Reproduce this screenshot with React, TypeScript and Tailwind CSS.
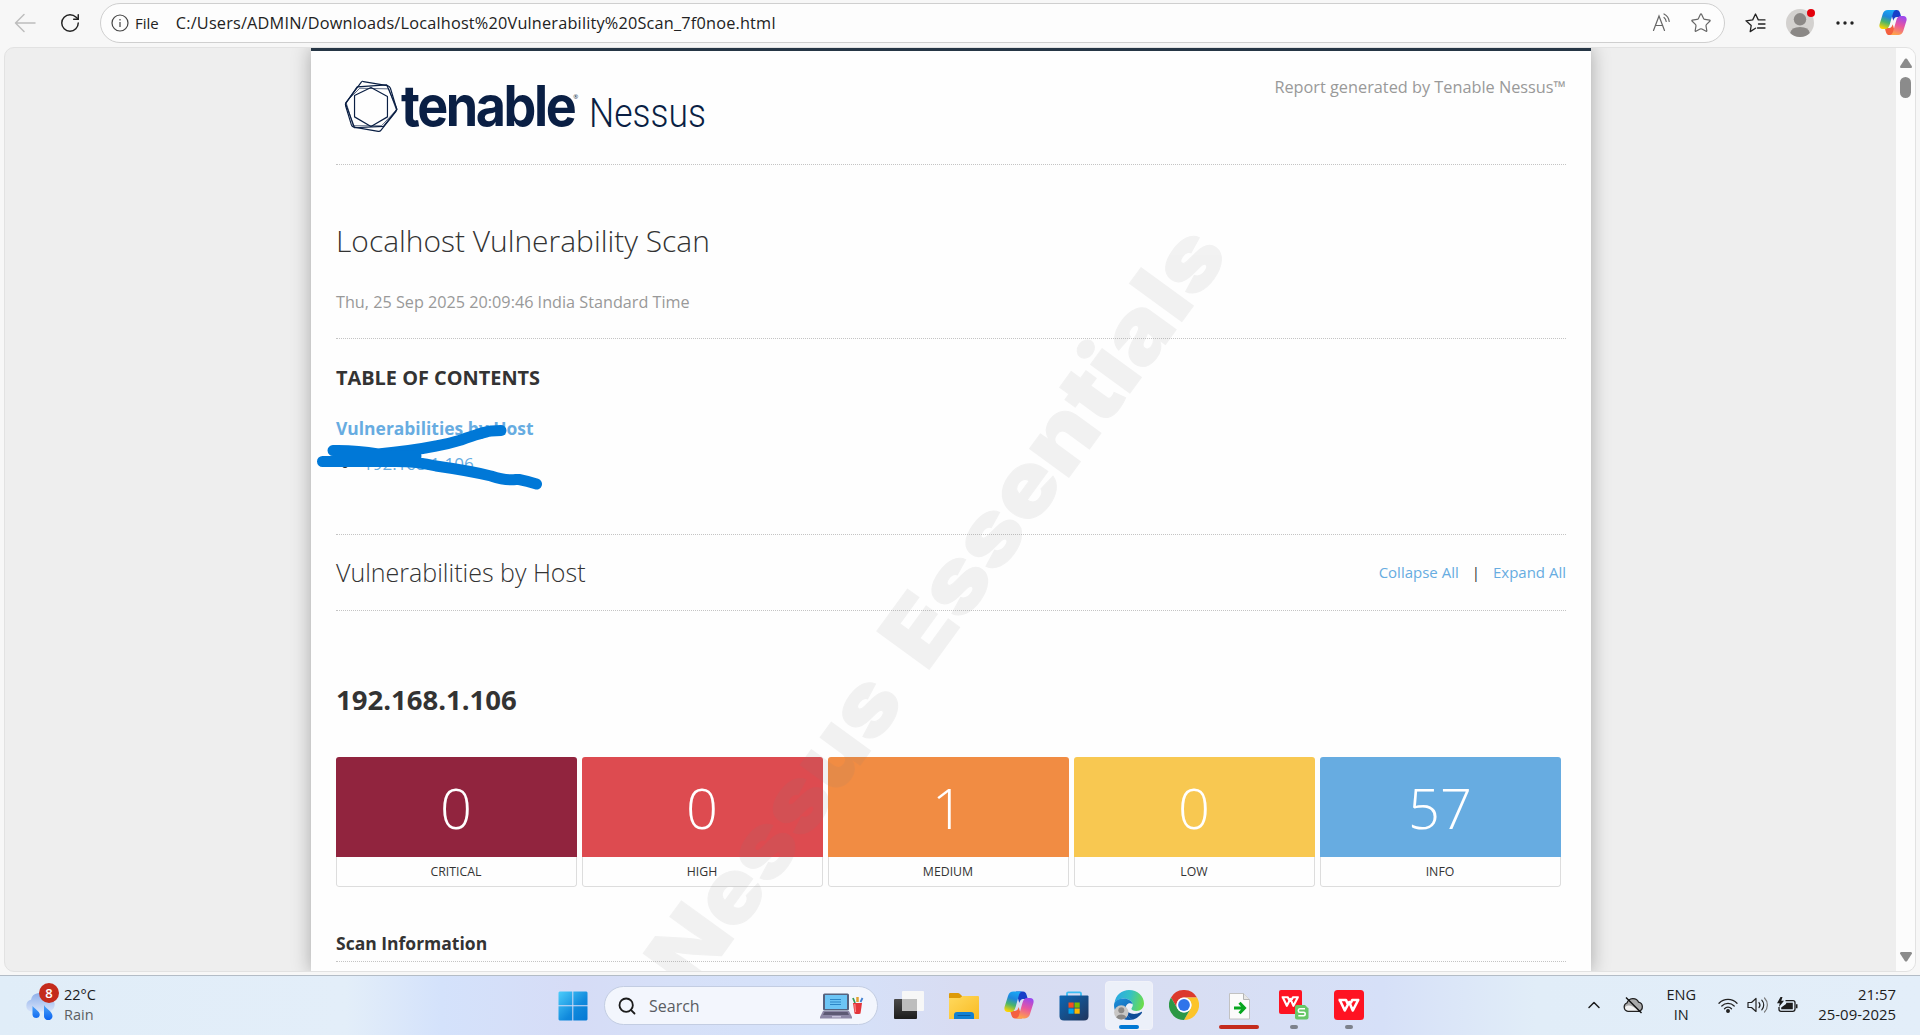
import React from 'react';
import { ChevronUp, RotateCw, Search, Star } from 'lucide-react';

const CopilotIcon = ({ id, className }: { id: string; className: string }) => (
  <svg viewBox="0 0 30 28" className={className}>
    <defs>
      <linearGradient id={id + 'a'} x1="0.6" y1="0" x2="0.3" y2="1">
        <stop offset="0" stopColor="#1aa7f5" />
        <stop offset="0.35" stopColor="#1f86dc" />
        <stop offset="0.65" stopColor="#4bb56a" />
        <stop offset="1" stopColor="#ffd400" />
      </linearGradient>
      <linearGradient id={id + 'b'} x1="0.7" y1="0" x2="0.4" y2="1">
        <stop offset="0" stopColor="#9a48f0" />
        <stop offset="0.5" stopColor="#e8569f" />
        <stop offset="1" stopColor="#ffa24a" />
      </linearGradient>
    </defs>
    <path d="M12 .6H19c2 0 3 1.2 3.7 3.6L23.8 8H19.6c-3 0-3.6 2-4.3 4z" fill="#1740c8" />
    <path d="M18 27.4H11c-2 0-3-1.2-3.7-3.6L6.2 20H10.400c3 0 3.600-2 4.300-4z" fill="#f4603f" />
    <path d="M9.500.6H18.200c-2 .4-2.800 2-3.400 4L11.600 16C10.600 19.400 9.400 21 6.400 21H4C.8 21-.2 18.600.700 15.600L4 5C4.900 2.100 6.700.6 9.500.6z" fill={`url(#${id}a)`} />
    <path d="M20.500 27.400H11.800c2-.4 2.800-2 3.400-4L18.400 12C19.400 8.600 20.600 7 23.600 7H26c3.200 0 4.200 2.400 3.300 5.400L26 23c-.9 2.900-2.700 4.400-5.500 4.400z" fill={`url(#${id}b)`} />
  </svg>
);

const TenableMark = () => (
  <svg viewBox="0 0 168 164" className="h-[54px] w-[56px] fill-none stroke-[#0a1f44] stroke-[3.6]" strokeLinejoin="round">
    <path d="M61 8Q58 5 54 10L32 40 8 72Q5 76 7 82L24 138Q26 144 32 146L106 159Q111 160 114 156L160 98Q163 94 161 88L143 28Q141 22 134 20Z" />
    <path d="M42 24L132 18 163 92 122 144 34 148 7 75Z" />
    <path d="M84 26L134 53V115L84 144 34 115V50Z" />
    <path d="M50 28L138 30 161 94 116 142 30 142 8 70Z" strokeWidth="2" />
  </svg>
);

const ReadAloudIcon = () => (
  <svg viewBox="0 0 20 20" className="size-5 fill-none stroke-[#666] stroke-[1.2]" strokeLinecap="round">
    <path d="M1.500 17.500L7 3l5.500 14.500M3.400 12.500h7.200M12 4.500c1.300 1 2 2.500 2.200 4M12 1c3 1.500 4.800 4 5.200 7.500" />
  </svg>
);

const FavoritesIcon = () => (
  <svg viewBox="0 0 21 20" className="h-5 w-[21px] fill-none stroke-[#222] stroke-[1.300]" strokeLinecap="round" strokeLinejoin="round">
    <path d="M10.500 15.200L5.200 18.600 6.200 12.500 1 7.800 7.700 6.900 10.500 1 13.300 6.900H20M13.500 11H20M12.500 15H20" />
  </svg>
);

const WindowsIcon = () => (
  <svg viewBox="0 0 30 30" className="size-[30px]">
    <defs>
      <linearGradient id="win" x1="0" y1="0" x2="1" y2="1">
        <stop offset="0" stopColor="#4ccdfb" />
        <stop offset="0.6" stopColor="#1089dc" />
        <stop offset="1" stopColor="#0478d4" />
      </linearGradient>
    </defs>
    <path d="M1.500.500H14.300V14.300H.500V1.500zM15.300.500H28.500L29.500 1.500V14.300H15.300zM.500 15.300H14.300V29.500H1.500L.500 28.500zM15.300 15.300H29.500V28.500L28.500 29.500H15.300z" fill="url(#win)" />
  </svg>
);

const LaptopIcon = () => (
  <svg viewBox="0 0 44 26" className="h-[26px] w-[44px]">
    <rect x="3" y=".5" width="26" height="17" rx="1.500" fill="#56627e" />
    <rect x="5" y="2" width="22" height="14" fill="#6cc5f5" />
    <path d="M10 6.500h11M10 9h11M10 11.500h11" stroke="#2c86c6" strokeWidth="1.200" />
    <path d="M3 18h26l3 6v1.500H0V24z" fill="#8d88a6" />
    <path d="M4.500 19h23l1.500 3H3z" fill="#5d5a74" />
    <path d="M12 23h9v1.500h-9z" fill="#c6c2da" />
    <path d="M35 10l-2-5" stroke="#3a9a5b" strokeWidth="1.800" />
    <path d="M37.500 9V4" stroke="#e0a030" strokeWidth="2.500" />
    <path d="M40.500 9l2-4" stroke="#3f7fd0" strokeWidth="1.800" />
    <path d="M33 10h9l-1.500 10.500q-3 1.200-6 0z" fill="#e3353a" />
    <path d="M34.800 11l.7 8" stroke="#ff8a8a" strokeWidth="1.200" />
  </svg>
);

const TaskViewIcon = () => (
  <svg viewBox="0 0 30 30" className="size-[30px]">
    <defs>
      <linearGradient id="tv" x1="0" y1="0" x2="0" y2="1">
        <stop offset="0" stopColor="#4a4a4a" />
        <stop offset="1" stopColor="#1c1c1c" />
      </linearGradient>
    </defs>
    <rect x="0" y="8" width="23" height="20" rx="1" fill="url(#tv)" />
    <rect x="8" y="0" width="22" height="20" rx="1" fill="#f7f7f7" />
    <rect x="8" y="8" width="15" height="12" fill="#bdbdbd" />
  </svg>
);

const ExplorerIcon = () => (
  <svg viewBox="0 0 30 28" className="h-7 w-[30px]">
    <defs>
      <linearGradient id="fe" x1="0" y1="0" x2="1" y2="1">
        <stop offset="0" stopColor="#ffd95e" />
        <stop offset="1" stopColor="#f9bb22" />
      </linearGradient>
    </defs>
    <path d="M0 2Q0 1 1 1H9Q10 1 11 2L13 4V10H0z" fill="#dd9a08" />
    <path d="M0 6H11L13.500 4H29Q30 4 30 5V27H0z" fill="url(#fe)" />
    <path d="M5 27V23Q5 20 8 20H22Q25 20 25 23V27z" fill="#1180d3" />
    <path d="M9 23.500H21" stroke="#0a5a9e" strokeWidth="1.200" strokeLinecap="round" />
  </svg>
);

const StoreIcon = () => (
  <svg viewBox="0 0 30 30" className="size-[30px]">
    <defs>
      <linearGradient id="st" x1="0" y1="0" x2="1" y2="1">
        <stop offset="0" stopColor="#0b67b5" />
        <stop offset="1" stopColor="#22355c" />
      </linearGradient>
    </defs>
    <path d="M8 6V2.500Q8 1.300 9.200 1.300H20.800Q22 1.300 22 2.500V6" fill="none" stroke="#3cbdf3" strokeWidth="1.800" />
    <path d="M.500 5.500Q.500 4.500 1.500 4.500H28.500Q29.500 4.500 29.500 5.500V25Q29.500 29.500 25 29.500H5Q.500 29.500.500 25z" fill="url(#st)" />
    <path d="M9.500 11.500h5.200v5.200H9.500z" fill="#f25022" />
    <path d="M15.500 11.500h5.200v5.200h-5.200z" fill="#7fba00" />
    <path d="M9.500 17.500h5.200v5.200H9.500z" fill="#00a4ef" />
    <path d="M15.500 17.500h5.200v5.200h-5.200z" fill="#ffb900" />
  </svg>
);

const EdgeIcon = () => (
  <svg viewBox="0 0 30 30" className="size-[30px]">
    <defs>
      <linearGradient id="e1" x1="0" y1="0.3" x2="1" y2="0.5">
        <stop offset="0" stopColor="#2aa8e4" />
        <stop offset="0.5" stopColor="#35c1c4" />
        <stop offset="1" stopColor="#6bdc4c" />
      </linearGradient>
      <linearGradient id="e2" x1="0" y1="0" x2="0.6" y2="1">
        <stop offset="0" stopColor="#1f93dc" />
        <stop offset="1" stopColor="#0b58ab" />
      </linearGradient>
    </defs>
    <path d="M.500 13C1.500 5 8 0 15 0 23.500 0 30 6 30 13.500 30 18 26.500 21 22.500 21 19 21 17.400 19.800 17.400 18.800 17.400 18 18.800 17 18.800 15 18.800 11.500 15 8.500 10 8.500 5 8.500 1.500 11 .500 13z" fill="url(#e1)" />
    <path d="M0 15C0 11 4.500 8.500 9.500 8.500 14.500 8.500 18 11.200 18.700 14.200 14.500 11.500 11.500 15 11.500 19 11.500 25 16 29.500 20.500 29 10 32.500 0 25.500 0 15z" fill="url(#e2)" />
    <path d="M11.500 18.500C11 25 16.500 30.500 20.500 29 24.500 27.500 27.500 24 28 22.500 28.200 21.800 27.700 21.700 27.200 22 20.500 25.500 13.500 24 11.500 18.500z" fill="#0e4d98" />
    <circle cx="7.300" cy="22.500" r="7.200" fill="#c9c7c5" />
    <circle cx="7.300" cy="20.200" r="3" fill="#8a8886" />
    <path d="M2.300 27.500a5.200 4.200 0 0 1 10 0 7.200 7.200 0 0 1-10 0z" fill="#8a8886" />
  </svg>
);

const ChromeIcon = () => (
  <svg viewBox="0 0 30 30" className="size-[30px]">
    <path d="M2 7.500A15 15 0 0 1 28 7.500H15A7.500 7.500 0 0 0 8.500 18.750Z" fill="#dc3a2d" />
    <path d="M28 7.500A15 15 0 0 1 15 30L21.500 18.750A7.500 7.500 0 0 0 15 7.500Z" fill="#fcc42a" />
    <path d="M15 30A15 15 0 0 1 2 7.500L8.500 18.750A7.500 7.500 0 0 0 21.500 18.750Z" fill="#2c9845" />
    <circle cx="15" cy="15" r="7.500" fill="#fff" />
    <circle cx="15" cy="15" r="5.900" fill="#2f74ea" />
  </svg>
);

const FileArrowIcon = () => (
  <svg viewBox="0 0 21 27" className="h-[27px] w-[21px]">
    <path d="M.500.500H14.500L20.500 6.500V26H.500z" fill="#fbfbfb" stroke="#c2c2c2" />
    <path d="M14.500.500V6.500H20.500" fill="#e6e6e6" stroke="#b4b4b4" />
    <path d="M5 15H15M10.500 9.800L15.500 15l-5 5.200" fill="none" stroke="#06a61f" strokeWidth="3" />
  </svg>
);

const wMark = 'M4.500 10H12L13.800 14M5.800 10L10.800 20.500 15.200 12 18.800 20.500 24.200 10H18.200L16.800 13';

const WpsIcon = () => (
  <svg viewBox="0 0 30 30" className="size-[30px]">
    <rect width="30" height="30" rx="3.500" fill="#fe1322" />
    <path d={wMark} fill="none" stroke="#fff" strokeWidth="2.600" strokeLinejoin="round" />
  </svg>
);

const WpsSheetIcon = () => (
  <svg viewBox="0 0 30 30" className="size-[30px]">
    <rect width="23" height="24" rx="2" fill="#fe1322" />
    <path d={wMark} transform="translate(-1 -1) scale(.82)" fill="none" stroke="#fff" strokeWidth="2.600" strokeLinejoin="round" />
    <path d="M16 17Q16 15 18 15H26L29.500 18.500V27.500Q29.500 29.500 27.500 29.500H18Q16 29.500 16 27.500z" fill="#67c768" />
    <path d="M26 18.800H20.800Q19.300 18.800 19.300 20.500T20.800 22.200H24.700Q26.200 22.200 26.200 24T24.700 25.800H19.300" fill="none" stroke="#fff" strokeWidth="1.600" />
  </svg>
);

const RainIcon = () => (
  <svg viewBox="0 0 30 28" className="h-7 w-[30px]">
    <defs>
      <linearGradient id="rc" x1="0" y1="0" x2="0" y2="1">
        <stop offset="0" stopColor="#8fb0ea" />
        <stop offset="1" stopColor="#d6e2fa" />
      </linearGradient>
      <linearGradient id="rd" x1="0" y1="0" x2="0" y2="1">
        <stop offset="0" stopColor="#4da5f8" />
        <stop offset="1" stopColor="#0a62f0" />
      </linearGradient>
    </defs>
    <path d="M6 19.500A6 6 0 0 1 6 7.800 8 8 0 0 1 21 5.500 7 7 0 0 1 24 19.500z" fill="url(#rc)" />
    <path d="M7.500 14C9.500 17 14.800 19 14.800 23A3.700 3.700 0 0 1 7.500 23zM19 13C21 17 27.500 19.500 27.500 24A4.200 4.200 0 0 1 19 24z" fill="url(#rd)" />
  </svg>
);

const CloudOffIcon = () => (
  <svg viewBox="0 0 21 18" className="h-[18px] w-[21px]">
    <path d="M5 15.300A4.300 4.300 0 0 1 4 7 6.200 6.200 0 0 1 15.600 6.200 4.700 4.700 0 0 1 16 15.300z" fill="#a9a9a9" stroke="#222" strokeWidth="1.300" />
    <path d="M2 11Q7 7 15 14.500H5Q2 14 2 11z" fill="#f1f1f1" />
    <path d="M3 1.500L18.500 17" stroke="#111" strokeWidth="1.400" />
  </svg>
);

const WifiIcon = () => (
  <svg viewBox="0 0 20 16" className="h-4 w-5 fill-none stroke-[#222] stroke-[1.300]" strokeLinecap="round">
    <path d="M1 6.200a12.500 12.500 0 0 1 18 0M3.800 9a8.800 8.800 0 0 1 12.400 0M6.500 11.700a5 5 0 0 1 7 0" />
    <circle cx="10" cy="14" r="1.300" className="fill-[#222]" />
  </svg>
);

const SpeakerIcon = () => (
  <svg viewBox="0 0 21 18" className="h-[18px] w-[21px] fill-none stroke-[#222] stroke-[1.200]" strokeLinecap="round" strokeLinejoin="round">
    <path d="M1 6.500H4.500L9 2.500V15.500L4.500 11.500H1zM12 6.500a4 4 0 0 1 0 5M14.800 4.200a7 7 0 0 1 0 9.600" />
    <path d="M17.500 2a10 10 0 0 1 0 14" stroke="#777" />
  </svg>
);

const BatteryIcon = () => (
  <svg viewBox="0 0 21 18" className="h-[18px] w-[21px]">
    <path d="M8.500 4.700H16Q18 4.700 18 6.700V13Q18 15.300 15.700 15.300H4Q2 15.300 2 13.300V11" fill="none" stroke="#1c1c1c" strokeWidth="1.300" />
    <path d="M9.300 6.700H15.800V13.300H4.200V11.500L9 8z" fill="#1c1c1c" />
    <path d="M19 8.200h1.500v4H19z" fill="#1c1c1c" />
    <path d="M3.500 1L0 7.300H2.700L2 11 7 4.700H4.300L5.500 1z" fill="#1c1c1c" />
  </svg>
);

const severities = [
  { count: 0, label: 'CRITICAL', color: 'bg-[#91243e]' },
  { count: 0, label: 'HIGH', color: 'bg-[#dd4b50]' },
  { count: 1, label: 'MEDIUM', color: 'bg-[#f18c43]' },
  { count: 0, label: 'LOW', color: 'bg-[#f8c851]' },
  { count: 57, label: 'INFO', color: 'bg-[#67ace1]' },
];

const Toolbar = () => (
  <header className="flex h-[47px] shrink-0 items-start text-[#222]">
    <svg viewBox="0 0 22 20" className="mt-[13px] ml-[14px] h-5 w-[22px] fill-none stroke-[#bdbdbd] stroke-[1.500]" strokeLinecap="round" strokeLinejoin="round">
      <path d="M21 10H1.500M10 1.500L1.500 10l8.500 8.500" />
    </svg>
    <RotateCw className="mt-[12px] ml-[23px] size-[22px]" strokeWidth={1.600} />
    <div className="mt-[3px] ml-[19px] flex h-10 w-[1625px] items-center rounded-full border border-[#cfcfcf] bg-[#fdfdfd]">
      <svg viewBox="0 0 18 18" className="ml-[10px] size-[18px] fill-none stroke-[#444] stroke-[1.200]">
        <circle cx="9" cy="9" r="8" />
        <path d="M9 8v5M9 5v1.400" />
      </svg>
      <span className="ml-[6px] text-[15px]">File</span>
      <span className="ml-[17px] flex-1 text-[16.300px] tracking-[0.190px] whitespace-nowrap">C:/Users/ADMIN/Downloads/Localhost%20Vulnerability%20Scan_7f0noe.html</span>
      <ReadAloudIcon />
      <Star className="mr-[12px] ml-[18px] size-[22px] text-[#666]" strokeWidth={1.300} />
    </div>
    <div className="mt-[13px] ml-[20px]"><FavoritesIcon /></div>
    <div className="relative mt-[9px] ml-[20px] size-7">
      <svg viewBox="0 0 28 28" className="size-7">
        <circle cx="14" cy="14" r="14" fill="#d3d1cf" />
        <circle cx="14" cy="10.300" r="6.200" fill="#8b8886" />
        <path d="M4.200 24q1-6 9.800-6t9.800 6A14 14 0 0 1 4.200 24z" fill="#8b8886" />
      </svg>
      <span className="absolute top-0 right-[-1px] size-2 rounded-full bg-[#e3000b]" />
    </div>
    <svg viewBox="0 0 18 4" className="mt-[21px] ml-[22px] h-1 w-[18px] fill-[#222]">
      <circle cx="2" cy="2" r="1.700" />
      <circle cx="9" cy="2" r="1.700" />
      <circle cx="16" cy="2" r="1.700" />
    </svg>
    <CopilotIcon id="ct" className="mt-[9px] ml-[25px] h-[27px] w-7" />
  </header>
);

const Watermark = () => (
  <svg viewBox="0 0 1280 924" className="pointer-events-none absolute top-0 left-0 h-[924px] w-[1280px] fill-[#808080] stroke-[#808080] stroke-[1] font-['Inter'] text-[89px] font-black opacity-[0.095]">
    <text transform="translate(385 940) rotate(-54)" textLength="363" lengthAdjust="spacingAndGlyphs" x="-5">Nessus</text>
    <text transform="translate(618.400 618) rotate(-54)" textLength="517" lengthAdjust="spacingAndGlyphs" x="-5">Essentials</text>
  </svg>
);

const Scribble = () => (
  <svg viewBox="0 0 240 80" className="pointer-events-none absolute top-[369px] left-0 h-[80px] w-[240px] fill-none stroke-[#0078d7] stroke-[11]" strokeLinecap="round" strokeLinejoin="round">
    <path d="M22 30.500Q45 30 67 34Q100 31 125 26Q137 24 150 20Q172 12 180 11L190 10.500" />
    <path d="M11.500 41.500H80Q105 41 125 46Q160 51 180 56Q195 61 205 59.500L208 59.500Q216 61 225.500 64" />
    <path d="M30 35L105 36" />
  </svg>
);

const Report = () => (
  <main className="relative h-[924px] w-[1280px] border-t-[3px] border-[#263645] bg-[#fefefe] px-[25px] text-[#333] shadow-[0_0_18px_rgba(0,0,0,0.300)]">
    <div className="flex h-[114px] justify-between border-b border-dotted border-[#c4c4c4]">
      <div className="flex items-start pl-[7px] text-[#0a1f44]">
        <div className="mt-[28px]"><TenableMark /></div>
        <span className="mt-[19px] ml-[2px] origin-left scale-x-[0.930] font-['Inter'] text-[56px] leading-[72px] font-bold tracking-[-2.600px]">tenable</span>
        <span className="mt-[42px] ml-[-14px] text-[6px]">®</span>
        <span className="mt-[38px] ml-[11px] origin-left scale-x-[0.865] font-['Roboto'] text-[41px] leading-[48px] font-light">Nessus</span>
      </div>
      <span className="mt-[24px] self-start text-[16.300px] leading-6 text-[#999]">Report generated by Tenable Nessus™</span>
    </div>
    <h1 className="mt-[56px] text-[29.950px] leading-[40px] font-light">Localhost Vulnerability Scan</h1>
    <p className="mt-[29px] border-b border-dotted border-[#c4c4c4] pb-6 text-[16.220px] leading-6 text-[#999]">Thu, 25 Sep 2025 20:09:46 India Standard Time</p>
    <h2 className="mt-[25px] text-[19.900px] leading-[28px] font-bold">TABLE OF CONTENTS</h2>
    <p className="mt-[24px] text-[17.450px] leading-6 font-bold text-[#67ace1]">Vulnerabilities by Host</p>
    <ul className="mt-3 text-[17px] leading-6">
      <li className="flex pl-[6px] text-[#67ace1]">
        <span className="mt-[10px] mr-[15px] size-[6px] rounded-full bg-[#222]" />
        192.168.1.106
      </li>
    </ul>
    <section className="mt-[58px] flex h-[77px] items-center justify-between border-y border-dotted border-[#c4c4c4]">
      <h2 className="text-[25px] font-light">Vulnerabilities by Host</h2>
      <div className="flex text-[15px] text-[#67ace1]">
        <span>Collapse All</span>
        <span className="mx-[13px] text-[#333]">|</span>
        <span>Expand All</span>
      </div>
    </section>
    <h2 className="mt-[69px] text-[27.500px] leading-[40px] font-bold">192.168.1.106</h2>
    <div className="mt-[37px] flex gap-[5px]">
      {severities.map((s) => (
        <div key={s.label} className="h-[130px] w-[241px] overflow-hidden rounded-[3px]">
          <div className={`flex h-[100px] items-center justify-center pr-px text-[56px] font-light text-white ${s.color}`}>{s.count}</div>
          <div className="flex h-[30px] items-center justify-center rounded-b-[3px] border border-t-0 border-[#ddd] pt-px pr-px text-[12.300px]">{s.label}</div>
        </div>
      ))}
    </div>
    <h3 className="mt-[44px] border-b border-dotted border-[#c4c4c4] pb-[6px] text-[17.500px] leading-6 font-bold">Scan Information</h3>
    <Scribble />
    <Watermark />
  </main>
);

const Taskbar = () => (
  <footer className="flex h-[60px] shrink-0 items-start border-t border-[#b3bcc6] bg-[linear-gradient(90deg,#e0edf8_0%,#e3eef9_18%,#d4e2fb_23%,#d6dcf6_30%,#d6e0f8_35%,#d5e2fa_43%,#d8dcf2_50%,#d8def3_62%,#d6e0f8_72%,#e1edf8_80%,#e3eef9_100%)] text-[15px] leading-5 text-[#1c1c1c]">
    <div className="relative ml-[25px] w-[39px]">
      <div className="pt-[16px]"><RainIcon /></div>
      <span className="absolute top-[7px] left-[14px] flex size-5 items-center justify-center rounded-full bg-[#c42b1c] text-[13px] font-semibold text-white">8</span>
    </div>
    <div className="mt-[9px] w-[494px] text-[14.500px]">
      <div>22°C</div>
      <div className="text-[#5c5f63]">Rain</div>
    </div>
    <div className="mt-[15px]"><WindowsIcon /></div>
    <div className="mt-[10px] ml-[16px] flex h-[39px] w-[274px] items-center rounded-full border border-[#c3cde2] bg-[#f3f6fd]">
      <Search className="ml-[12px] size-[20px]" strokeWidth={2.200} />
      <span className="ml-[12px] flex-1 text-[16px] text-[#5a5c62]">Search</span>
      <div className="mr-[13px]"><LaptopIcon /></div>
    </div>
    <div className="mt-[15px] ml-[16px]"><TaskViewIcon /></div>
    <div className="mt-[16px] ml-[25px]"><ExplorerIcon /></div>
    <div className="mt-[15px] ml-[25px]"><CopilotIcon id="cb" className="h-[28px] w-[30px]" /></div>
    <div className="mt-[15px] ml-[25px]"><StoreIcon /></div>
    <div className="mt-[5px] ml-[16px] flex h-[49px] w-[48px] flex-col items-center rounded-[4px] border border-[#f1f2f9] bg-[#ecf0f9]">
      <div className="mt-[8px]"><EdgeIcon /></div>
      <div className="mt-[5px] h-1 w-5 rounded-full bg-[#0078d4]" />
    </div>
    <div className="mt-[14px] ml-[16px]"><ChromeIcon /></div>
    <div className="ml-[20px] flex w-10 flex-col items-center">
      <div className="mt-[17px]"><FileArrowIcon /></div>
      <div className="mt-[5px] h-1 w-10 rounded-full bg-[#c42b1c]" />
    </div>
    <div className="ml-[20px] flex flex-col items-center">
      <div className="mt-[14px]"><WpsSheetIcon /></div>
      <div className="mt-[5px] h-1 w-2 rounded-full bg-[#7d828c]" />
    </div>
    <div className="ml-[25px] flex flex-col items-center">
      <div className="mt-[14px]"><WpsIcon /></div>
      <div className="mt-[5px] h-1 w-2 rounded-full bg-[#7d828c]" />
    </div>
    <div className="flex flex-1 justify-end pr-[24px]">
      <ChevronUp className="mt-[19px] size-5" strokeWidth={1.800} />
      <div className="mt-[20px] ml-[19px]"><CloudOffIcon /></div>
      <div className="mt-[9px] ml-[22px] w-[30px] text-center text-[14.500px]"><div>ENG</div><div>IN</div></div>
      <div className="mt-[21px] ml-[22px]"><WifiIcon /></div>
      <div className="mt-[20px] ml-[9px]"><SpeakerIcon /></div>
      <div className="mt-[20px] ml-[9px]"><BatteryIcon /></div>
      <div className="mt-[8px] ml-[20px] text-right text-[14.900px]"><div>21:57</div><div>25-09-2025</div></div>
    </div>
  </footer>
);

export default function App() {
  return (
    <div className="flex h-[1035px] w-[1920px] flex-col overflow-hidden bg-[#f7f7f7] font-['Open_Sans',sans-serif] text-base">
      <Toolbar />
      <div className="mb-[3px] ml-[4px] flex h-[925px] w-[1912px] shrink-0 overflow-hidden rounded-[10px] border border-[#e2e2e2] bg-[#eee]">
        <div className="flex flex-1 overflow-hidden pl-[306px]"><Report /></div>
        <div className="flex w-[19px] flex-col items-center bg-[#fcfcfc]">
          <svg viewBox="0 0 12 10" className="mt-[10px] h-[10px] w-3 fill-[#8b8b8b]"><path d="M5 .8Q6 0 7 .8L12 8.500Q12 10 11 10H1Q0 10 0 8.500z" /></svg>
          <div className="mt-[9px] h-[21px] w-[11px] rounded-full bg-[#8b8b8b]" />
          <svg viewBox="0 0 12 10" className="mt-auto mb-[9px] h-[10px] w-3 rotate-180 fill-[#8b8b8b]"><path d="M5 .8Q6 0 7 .8L12 8.500Q12 10 11 10H1Q0 10 0 8.500z" /></svg>
        </div>
      </div>
      <Taskbar />
    </div>
  );
}
